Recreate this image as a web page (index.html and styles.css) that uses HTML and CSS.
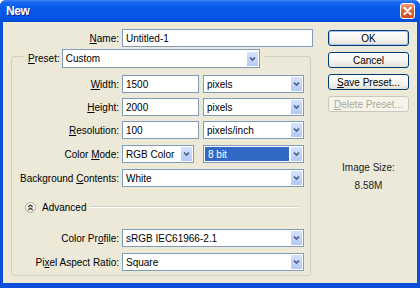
FILE: index.html
```html
<!DOCTYPE html>
<html>
<head>
<meta charset="utf-8">
<title>New</title>
<link rel="stylesheet" href="styles.css">
</head>
<body>
<div class="window">
  <div class="titlebar">
    <span class="title">New</span>
    <span class="close"><svg width="14" height="14" viewBox="0 0 14 14"><path d="M3.5 3.5 L10.5 10.5 M10.5 3.5 L3.5 10.5" stroke="#fff" stroke-width="2" stroke-linecap="round"/></svg></span>
  </div>
  <div class="client">
    <div class="left">
      <div class="row name-row">
        <span class="label name-label"><u>N</u>ame:</span>
        <span class="field name-field">Untitled-1</span>
      </div>
      <div class="group">
        <div class="preset">
          <span class="plabel"><u>P</u>reset:</span>
          <span class="field select preset-select"><span class="value">Custom</span><span class="arrow"><svg width="11" height="14" viewBox="0 0 11 14"><path d="M3 5.5 L5.5 8 L8 5.5" fill="none" stroke="#4D6185" stroke-width="1.7"/></svg></span></span>
        </div>
        <div class="row first">
          <span class="label"><u>W</u>idth:</span>
          <span class="field num">1500</span>
          <span class="field select unit"><span class="value">pixels</span><span class="arrow"><svg width="11" height="14" viewBox="0 0 11 14"><path d="M3 5.5 L5.5 8 L8 5.5" fill="none" stroke="#4D6185" stroke-width="1.7"/></svg></span></span>
        </div>
        <div class="row">
          <span class="label"><u>H</u>eight:</span>
          <span class="field num">2000</span>
          <span class="field select unit"><span class="value">pixels</span><span class="arrow"><svg width="11" height="14" viewBox="0 0 11 14"><path d="M3 5.5 L5.5 8 L8 5.5" fill="none" stroke="#4D6185" stroke-width="1.7"/></svg></span></span>
        </div>
        <div class="row">
          <span class="label"><u>R</u>esolution:</span>
          <span class="field num">100</span>
          <span class="field select unit"><span class="value">pixels/inch</span><span class="arrow"><svg width="11" height="14" viewBox="0 0 11 14"><path d="M3 5.5 L5.5 8 L8 5.5" fill="none" stroke="#4D6185" stroke-width="1.7"/></svg></span></span>
        </div>
        <div class="row wide-gap">
          <span class="label">Color <u>M</u>ode:</span>
          <span class="field select mode"><span class="value">RGB Color</span><span class="arrow"><svg width="11" height="14" viewBox="0 0 11 14"><path d="M3 5.5 L5.5 8 L8 5.5" fill="none" stroke="#4D6185" stroke-width="1.7"/></svg></span></span>
          <span class="field select unit focus"><span class="value">8 bit</span><span class="arrow"><svg width="11" height="14" viewBox="0 0 11 14"><path d="M3 5.5 L5.5 8 L8 5.5" fill="none" stroke="#4D6185" stroke-width="1.7"/></svg></span></span>
        </div>
        <div class="row wide-gap">
          <span class="label">Background <u>C</u>ontents:</span>
          <span class="field select full"><span class="value">White</span><span class="arrow"><svg width="11" height="14" viewBox="0 0 11 14"><path d="M3 5.5 L5.5 8 L8 5.5" fill="none" stroke="#4D6185" stroke-width="1.7"/></svg></span></span>
        </div>
        <div class="advanced">
          <span class="toggle"><svg width="11" height="11" viewBox="0 0 11 11"><path d="M3.3 5 L5.5 3 L7.7 5 M3.3 8 L5.5 6 L7.7 8" fill="none" stroke="#333" stroke-width="1.1"/></svg></span>
          <span class="adv-text">Advanced</span>
          <span class="rule"></span>
        </div>
        <div class="row profile">
          <span class="label">Color Pr<u>o</u>file:</span>
          <span class="field select full"><span class="value">sRGB IEC61966-2.1</span><span class="arrow"><svg width="11" height="14" viewBox="0 0 11 14"><path d="M3 5.5 L5.5 8 L8 5.5" fill="none" stroke="#4D6185" stroke-width="1.7"/></svg></span></span>
        </div>
        <div class="row pixel">
          <span class="label">Pi<u>x</u>el Aspect Ratio:</span>
          <span class="field select full"><span class="value">Square</span><span class="arrow"><svg width="11" height="14" viewBox="0 0 11 14"><path d="M3 5.5 L5.5 8 L8 5.5" fill="none" stroke="#4D6185" stroke-width="1.7"/></svg></span></span>
        </div>
      </div>
    </div>
    <div class="right">
      <span class="btn default">OK</span>
      <span class="btn">Cancel</span>
      <span class="btn"><u>S</u>ave Preset...</span>
      <span class="btn disabled"><u>D</u>elete Preset...</span>
      <div class="info">
        <div>Image Size:</div>
        <div>8.58M</div>
      </div>
    </div>
  </div>
</div>
</body>
</html>
```

FILE: styles.css
```css
html, body {
  margin: 0;
  padding: 0;
}
body {
  width: 420px;
  height: 288px;
  overflow: hidden;
  font-family: "Liberation Sans", Arial, sans-serif;
  font-size: 10px;
  color: #000;
  background: #fff;
}
.window {
  width: 420px;
  height: 288px;
  display: flex;
  flex-direction: column;
  background: #0D4FDB;
  border-radius: 6px 6px 0 0;
  box-sizing: border-box;
}
.titlebar {
  height: 22px;
  flex: none;
  display: flex;
  align-items: center;
  justify-content: space-between;
  padding: 0 5px 0 6px;
  background: linear-gradient(180deg, #3A86F8 0%, #1565F0 12%, #0858E8 40%, #0455E6 80%, #0449D4 100%);
  border-radius: 6px 6px 0 0;
}
.title {
  color: #fff;
  font-weight: bold;
  font-size: 12px;
  letter-spacing: -0.4px;
  text-shadow: 1px 1px 0 #0A2A9A;
}
.close {
  width: 15px;
  height: 16px;
  box-sizing: border-box;
  border: 1px solid #fff;
  border-radius: 3px;
  background: linear-gradient(180deg, #F0A07E 0%, #E2663B 45%, #CF4A1E 100%);
  display: flex;
  align-items: center;
  justify-content: center;
}
.client {
  flex: 1;
  margin: 0 3px 5px 3px;
  background: #ECE9D8;
  display: flex;
  gap: 15px;
  padding: 7px 8px 0 8px;
}
.left {
  width: 302px;
  display: flex;
  flex-direction: column;
}
.row {
  display: flex;
  align-items: center;
  height: 18px;
  margin-top: 5px;
}
.row.first { margin-top: 7px; }
.row.wide-gap { margin-top: 6px; }
.row.profile { margin-top: 16px; }
.row.pixel { margin-top: 6px; }
.name-row { margin-top: 0; }
.label {
  width: 107px;
  text-align: right;
  margin-right: 3px;
  white-space: nowrap;
}
.name-label { width: 108px; }
.field {
  height: 18px;
  box-sizing: border-box;
  border: 1px solid #7F9DB9;
  background: #fff;
  display: flex;
  align-items: center;
  padding-left: 3px;
  white-space: nowrap;
}
.name-field { width: 191px; }
.num { width: 77px; margin-right: 4px; }
.select { padding-left: 0; }
.select .value {
  flex: 1;
  padding-left: 3px;
  height: 14px;
  display: flex;
  align-items: center;
}
.select .arrow {
  width: 11px;
  height: 14px;
  margin-right: 1px;
  background: linear-gradient(180deg, #D6E2FD 0%, #C1D3FB 60%, #B4C9F8 100%);
  display: flex;
}
.unit { width: 101px; }
.mode { width: 72px; margin-right: 9px; }
.full { width: 182px; }
.focus .value {
  background: #316AC5;
  color: #fff;
  margin: 0 2px 0 1px;
}
.group {
  width: 300px;
  box-sizing: border-box;
  margin-top: 9px;
  border: 1px solid #D0D0BF;
  border-radius: 3px;
  padding: 0 6px 4px 0;
  display: flex;
  flex-direction: column;
}
.preset {
  align-self: flex-start;
  margin: -8px 0 0 12px;
  padding: 0 4px;
  background: #ECE9D8;
  display: flex;
  align-items: center;
  gap: 2px;
  height: 19px;
}
.preset-select { width: 198px; height: 19px; }
.advanced {
  display: flex;
  align-items: center;
  height: 12px;
  margin-top: 14px;
  padding-left: 13px;
}
.toggle {
  width: 11px;
  height: 11px;
  box-sizing: border-box;
  border: 1px solid #B5B3A4;
  border-radius: 50%;
  background: linear-gradient(180deg, #FFFFFF, #E8E6DA);
  display: flex;
  align-items: center;
  justify-content: center;
  overflow: hidden;
}
.toggle svg { flex: none; }
.adv-text { margin-left: 6px; }
.rule {
  flex: 1;
  margin: 0 6px 0 4px;
  border-top: 1px solid #D0D0BF;
  border-bottom: 1px solid #FFFFFF;
  height: 0;
}
.right {
  width: 83px;
  padding-top: 1px;
  display: flex;
  flex-direction: column;
  gap: 6px;
}
.btn {
  height: 16px;
  box-sizing: border-box;
  border: 1px solid #003C74;
  border-radius: 3px;
  background: linear-gradient(180deg, #FFFFFF 0%, #F6F5F0 55%, #E3E2DA 100%);
  display: flex;
  align-items: center;
  justify-content: center;
  white-space: nowrap;
}
.btn.default {
  box-shadow: inset 0 0 0 1px #A9C3EE;
}
.btn.disabled {
  border-color: #C9C7BA;
  background: #F5F4EA;
  color: #ACA899;
}
.info {
  margin-top: 41px;
  text-align: center;
  line-height: 18px;
  color: #222;
}
```
